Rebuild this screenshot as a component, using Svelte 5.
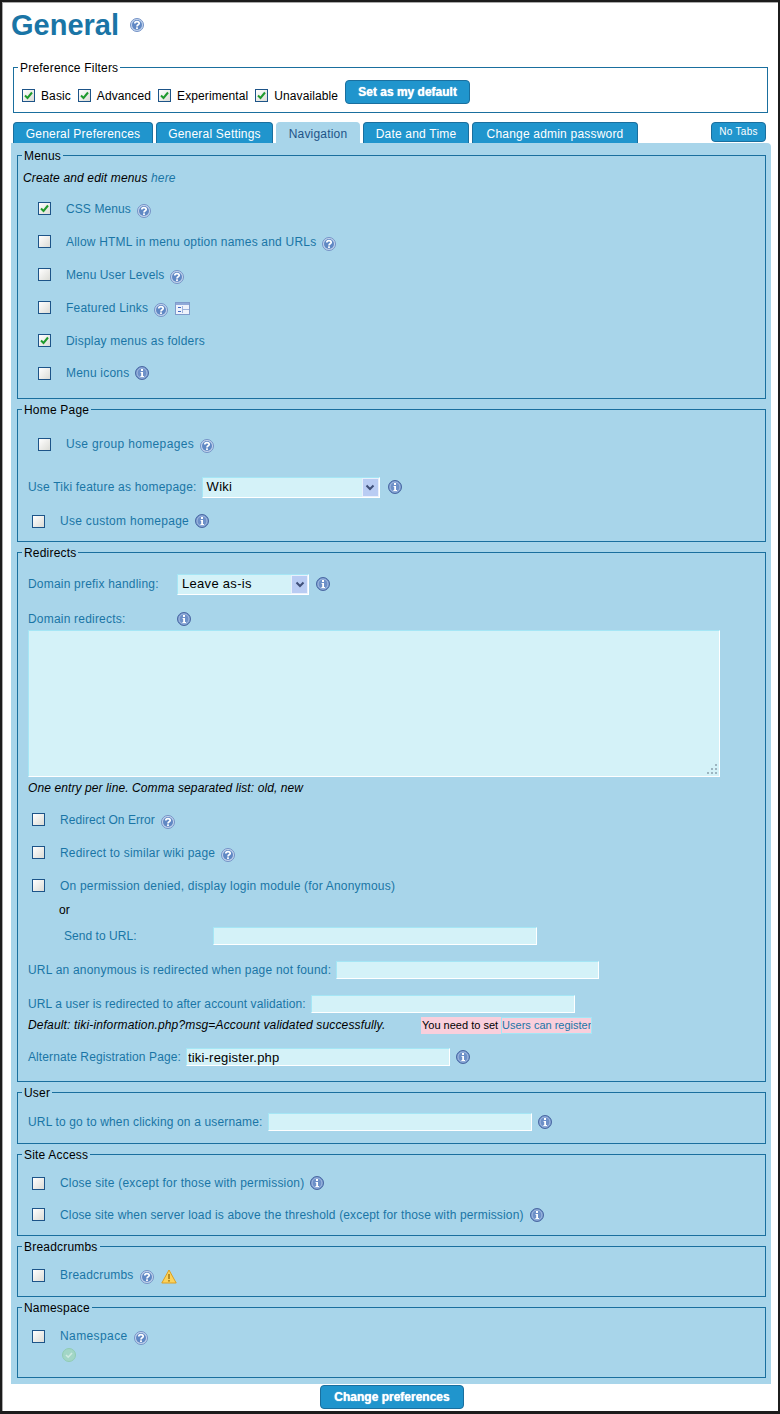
<script>
  const tabs = [
    { label: 'General Preferences', width: 140 },
    { label: 'General Settings', width: 117 },
    { label: 'Navigation', width: 84 },
    { label: 'Date and Time', width: 106 },
    { label: 'Change admin password', width: 166 }
  ];
  const filters = ['Basic', 'Advanced', 'Experimental', 'Unavailable'];
</script>

{#snippet help()}
  <svg class="ico help" width="14" height="14" viewBox="0 0 14 14" aria-hidden="true">
    <circle cx="7" cy="7" r="6.5" fill="#c6d6ee" stroke="#7392c6"/>
    <circle cx="7" cy="7" r="5" fill="#6088c4"/>
    <path d="M4.8 5.4C4.8 3 9.2 3 9.2 5.4C9.2 6.9 7 6.6 7 8.4" fill="none" stroke="#fff" stroke-width="1.7"/>
    <rect x="6.1" y="9.3" width="1.8" height="1.8" fill="#fff"/>
  </svg>
{/snippet}

{#snippet info()}
  <svg class="ico" width="14" height="14" viewBox="0 0 14 14" aria-hidden="true">
    <circle cx="7" cy="7" r="6.5" fill="#6d90c8" stroke="#4a68a2"/>
    <circle cx="7" cy="7" r="5" fill="none" stroke="#a6bde2"/>
    <rect x="6" y="3" width="2" height="2" fill="#fff"/>
    <path d="M5.6 6H8V10H9V11H5.4V10H6.2V7H5.6Z" fill="#fff"/>
  </svg>
{/snippet}

{#snippet box(on)}
  <span class="box">
    {#if on}
      <svg width="11" height="11" viewBox="0 0 11 11" aria-hidden="true"><path d="M2 5.5L4.5 8L9 2.5" fill="none" stroke="#1f9a2c" stroke-width="2"/></svg>
    {/if}
  </span>
{/snippet}

{#snippet select(value, cls)}
  <div class="select {cls}">
    <span>{value}</span>
    <span class="arrow"><svg width="10" height="7" viewBox="0 0 10 7" aria-hidden="true"><path d="M1.5 1.5L5 5L8.5 1.5" fill="none" stroke="#3f4f78" stroke-width="2"/></svg></span>
  </div>
{/snippet}

<div class="frame">
  <h1>General <span class="titleico">{@render help()}</span></h1>

  <fieldset class="filters">
    <legend>Preference Filters</legend>
    <div class="filter-row">
      {#each filters as f}
        <span class="filter">{@render box(true)}<span>{f}</span></span>
      {/each}
      <button class="btn default-btn">Set as my default</button>
    </div>
  </fieldset>

  <div class="tabs">
    {#each tabs as t, i}
      <span class="tab" class:active={i === 2} style="width: {t.width}px">{t.label}</span>
    {/each}
    <button class="notabs">No Tabs</button>
  </div>

  <div class="panel">
    <fieldset>
      <legend>Menus</legend>
      <div class="intro"><em class="sp15">Create and edit menus <a href="#here">here</a></em></div>
      <div class="row h33 ind6">{@render box(true)}<a class="lbl sp1" href="#a">CSS Menus</a>{@render help()}</div>
      <div class="row h33 ind6">{@render box(false)}<a class="lbl" href="#a">Allow HTML in menu option names and URLs</a>{@render help()}</div>
      <div class="row h33 ind6">{@render box(false)}<a class="lbl sp1" href="#a">Menu User Levels</a>{@render help()}</div>
      <div class="row h33 ind6">{@render box(false)}<a class="lbl" href="#a">Featured Links</a>{@render help()}
        <svg class="docs" width="15" height="13" viewBox="0 0 15 13" aria-hidden="true">
          <rect x=".5" y=".5" width="14" height="12" fill="#eef2fb" stroke="#7f9bcb"/>
          <rect x="1" y="1" width="13" height="2" fill="#8fa9d8"/>
          <path d="M3 5.5H6M3 9.5H6" stroke="#3f68c0"/>
          <path d="M7.5 4V11M7.5 7.5H14" stroke="#9db3dc"/>
        </svg>
      </div>
      <div class="row h33 ind6">{@render box(true)}<a class="lbl" href="#a">Display menus as folders</a></div>
      <div class="row h32 ind6 last9">{@render box(false)}<a class="lbl" href="#a">Menu icons</a>{@render info()}</div>
    </fieldset>

    <fieldset>
      <legend>Home Page</legend>
      <div class="row h54 ind6">{@render box(false)}<a class="lbl sp35" href="#a">Use group homepages</a>{@render help()}</div>
      <div class="row h32 ind-f">
        <span class="plain">Use Tiki feature as homepage:</span>
        {@render select('Wiki', 'sel-wiki')}
        {@render info()}
      </div>
      <div class="row h36 ind0 last2">{@render box(false)}<a class="lbl sp3" href="#a">Use custom homepage</a>{@render info()}</div>
    </fieldset>

    <fieldset>
      <legend>Redirects</legend>
      <div class="row h48 ind-f">
        <span class="plain w149">Domain prefix handling:</span>
        {@render select('Leave as-is', 'sel-leave')}
        {@render info()}
      </div>
      <div class="row h22 ind-f tight">
        <span class="plain w149">Domain redirects:</span>
        {@render info()}
      </div>
      <div class="ta-wrap">
        <textarea class="ta"></textarea>
        <svg class="grip" width="12" height="12" viewBox="0 0 12 12" aria-hidden="true">
          <path d="M9 1h2v2H9zM5 5h2v2H5zM9 5h2v2H9zM1 9h2v2H1zM5 9h2v2H5zM9 9h2v2H9z" fill="#9db5c0"/>
        </svg>
      </div>
      <div class="note h22"><em class="sp1">One entry per line. Comma separated list: old, new</em></div>
      <div class="row h33 ind0 mt4">{@render box(false)}<a class="lbl sp05" href="#a">Redirect On Error</a>{@render help()}</div>
      <div class="row h33 ind0">{@render box(false)}<a class="lbl" href="#a">Redirect to similar wiki page</a>{@render help()}</div>
      <div class="row h33 ind0">{@render box(false)}<a class="lbl" href="#a">On permission denied, display login module (for Anonymous)</a></div>
      <div class="or">or</div>
      <div class="row h40 send">
        <span class="plain w149 sp05">Send to URL:</span>
        <input class="input w324" />
      </div>
      <div class="row h28 ind-f">
        <span class="plain">URL an anonymous is redirected when page not found:</span>
        <input class="input w263" />
      </div>
      <div class="row h26 ind-f mt7">
        <span class="plain sp1">URL a user is redirected to after account validation:</span>
        <input class="input w264" />
      </div>
      <div class="default-row">
        <em class="default-text">Default: tiki-information.php?msg=Account validated successfully.</em>
        <span class="warn">You need to set <a href="#r">Users can register</a></span>
      </div>
      <div class="row h24 ind-f mt12 last12">
        <span class="plain sp1">Alternate Registration Page:</span>
        <input class="input w264 alt" value="tiki-register.php" />
        {@render info()}
      </div>
    </fieldset>

    <fieldset>
      <legend>User</legend>
      <div class="row h43 ind-f">
        <span class="plain sp15">URL to go to when clicking on a username:</span>
        <input class="input w264" />
        {@render info()}
      </div>
    </fieldset>

    <fieldset>
      <legend>Site Access</legend>
      <div class="row h32 ind0 mt5">{@render box(false)}<a class="lbl" href="#a">Close site (except for those with permission)</a>{@render info()}</div>
      <div class="row h31 ind0 last5">{@render box(false)}<a class="lbl sp15" href="#a">Close site when server load is above the threshold (except for those with permission)</a>{@render info()}</div>
    </fieldset>

    <fieldset>
      <legend>Breadcrumbs</legend>
      <div class="row h32 ind0 mt5 last5">{@render box(false)}<a class="lbl" href="#a">Breadcrumbs</a>{@render help()}
        <svg class="warnico" width="16" height="15" viewBox="0 0 16 15" aria-hidden="true">
          <path d="M8 1L15.2 14H.8Z" fill="#fbd35c" stroke="#dd9f20" stroke-linejoin="round"/>
          <path d="M8 5V10" stroke="#a87c14" stroke-width="1.6"/>
          <rect x="7.2" y="11" width="1.6" height="1.6" fill="#a87c14"/>
        </svg>
      </div>
    </fieldset>

    <fieldset>
      <legend>Namespace</legend>
      <div class="row h32 ind0 mt5">{@render box(false)}<a class="lbl sp4" href="#a">Namespace</a>{@render help()}</div>
      <div class="tick">
        <svg width="14" height="14" viewBox="0 0 14 14" aria-hidden="true">
          <circle cx="7" cy="7" r="6.5" fill="#a2d6c6" stroke="#90ccb2"/>
          <path d="M4 7L6.2 9.2L10 5" fill="none" stroke="#cfeae2" stroke-width="1.6"/>
        </svg>
      </div>
    </fieldset>
  </div>

  <div class="submit"><button class="btn change">Change preferences</button></div>
</div>

<style>
  :global(body) { margin: 0; background: #fff; }
  .frame {
    box-sizing: border-box;
    width: 780px;
    height: 1414px;
    border: 2px solid #1c1c1c;
    border-bottom-width: 3px;
    box-shadow: inset 1px 1px 0 #aaa;
    background: #fff;
    font: 12px/14px "Liberation Sans", Arial, sans-serif;
    letter-spacing: 0.2px;
    color: #000;
    overflow: hidden;
  }
  h1 {
    margin: 0;
    height: 59px;
    padding: 2px 0 16px 9px;
    box-sizing: border-box;
    font: bold 29px/36px "Liberation Sans", Arial, sans-serif;
    letter-spacing: 0;
    color: #1a75a6;
    display: flex;
    align-items: center;
  }
  .titleico { display: inline-flex; margin-left: 5px; }
  .ico { flex: none; margin-left: 6px; }
  .help { position: relative; top: 2px; }
  .titleico .help { top: 0; }
  fieldset {
    margin: 0 5px 4px 6px;
    padding: 1px 0 0;
    border: 1px solid #1a6f9e;
    min-width: 0;
  }
  legend {
    margin-left: 4px;
    padding: 0 2px;
    line-height: 13px;
    color: #000;
    position: relative;
    top: 1px;
  }
  .filters {
    margin: 0 10px 0 11px;
    padding: 0;
    height: 52px;
    box-sizing: border-box;
  }
  .filter-row {
    display: flex;
    align-items: center;
    height: 30px;
    padding: 6px 0 0 8px;
    box-sizing: border-box;
    letter-spacing: 0.1px;
  }
  .filter { display: flex; align-items: center; gap: 6px; margin: 7px 7px 0 0; }
  .box {
    flex: none;
    box-sizing: border-box;
    width: 13px;
    height: 13px;
    border: 1px solid #1d5488;
    background: linear-gradient(135deg, #fff, #dcdcd6);
    display: inline-flex;
    align-items: center;
    justify-content: center;
  }
  .btn {
    font: bold 12px/14px "Liberation Sans", Arial, sans-serif;
    letter-spacing: 0;
    color: #fff;
    background: #2095cd;
    border: 1px solid #1a6f9e;
    border-radius: 4px;
    padding: 0;
    text-shadow: 0 0 1px #fff;
  }
  .default-btn { width: 125px; height: 24px; }
  .tabs {
    display: flex;
    gap: 3px;
    height: 21px;
    margin: 9px 0 0 11px;
    align-items: flex-start;
  }
  .tab {
    box-sizing: border-box;
    height: 21px;
    padding-top: 4px;
    text-align: center;
    background: #2095cd;
    color: #fff;
    border: 1px solid #1a6f9e;
    border-bottom: 0;
    border-radius: 4px 4px 0 0;
    white-space: nowrap;
  }
  .tab.active { background: #a8d5ea; color: #1d5488; border-color: #a8d5ea; }
  .notabs {
    margin-left: auto;
    margin-right: 12px;
    width: 55px;
    height: 20px;
    padding: 0;
    font: 10px/12px "Liberation Sans", Arial, sans-serif;
    letter-spacing: 0.3px;
    color: #fff;
    background: #2095cd;
    border: 1px solid #1a6f9e;
    border-radius: 4px;
  }
  .panel {
    margin: 0 7px 0 9px;
    padding: 6px 0 2px;
    background: #a8d5ea;
    border-radius: 0 4px 0 0;
  }
  .intro { height: 29px; padding-left: 5px; display: flex; align-items: center; }
  a { color: #1a75a6; text-decoration: none; }
  .row { display: flex; align-items: center; white-space: nowrap; }
  .h22 { height: 22px; }
  .h24 { height: 24px; }
  .h26 { height: 26px; }
  .h28 { height: 28px; }
  .h31 { height: 31px; }
  .h32 { height: 32px; }
  .h33 { height: 33px; }
  .h36 { height: 36px; }
  .h40 { height: 40px; }
  .h43 { height: 43px; }
  .h48 { height: 48px; }
  .h54 { height: 54px; }
  .ind6 { padding-left: 20px; }
  .ind0 { padding-left: 14px; }
  .ind-f { padding-left: 10px; }
  .mt4 { margin-top: 4px; }
  .mt5 { margin-top: 5px; }
  .mt7 { margin-top: 7px; }
  .mt12 { margin-top: 12px; }
  .last2 { margin-bottom: 2px; }
  .last5 { margin-bottom: 5px; }
  .last9 { margin-bottom: 9px; }
  .last12 { margin-bottom: 12px; }
  .lbl { margin-left: 15px; }
  .sp05 { letter-spacing: 0.05px; }
  .sp1 { letter-spacing: 0.1px; }
  .sp15 { letter-spacing: 0.15px; }
  .sp3 { letter-spacing: 0.3px; }
  .sp35 { letter-spacing: 0.35px; }
  .sp4 { letter-spacing: 0.4px; }
  .plain { color: #1a75a6; margin-right: 5px; }
  .w149 { display: inline-block; width: 144px; }
  .tight .ico { margin-left: 0; }
  .docs { margin-left: 7px; position: relative; top: 1px; }
  .warnico { margin-left: 7px; position: relative; top: 1px; }
  .select {
    box-sizing: border-box;
    display: flex;
    align-items: center;
    justify-content: space-between;
    height: 21px;
    background: #d4f2f8;
    border: 1px solid #a5e6f5;
    border-right-color: #fff;
    border-bottom-color: #fff;
    font-size: 13px;
    padding-left: 4px;
    color: #000;
    letter-spacing: 0.3px;
    flex: none;
  }
  .sel-wiki { width: 178px; margin-right: 2px; }
  .sel-leave { width: 132px; margin-right: 1px; }
  .arrow {
    box-sizing: border-box;
    width: 17px;
    height: 19px;
    background: #b9ccf3;
    border: 1px solid #e8f0fc;
    display: flex;
    align-items: center;
    justify-content: center;
  }
  .ta-wrap { position: relative; height: 147px; margin-left: 10px; width: 692px; }
  .ta {
    display: block;
    box-sizing: border-box;
    width: 692px;
    height: 147px;
    margin: 0;
    padding: 2px;
    resize: none;
    outline: 0;
    background: #d4f2f8;
    border: 1px solid #a5e6f5;
    border-right-color: #fff;
    border-bottom-color: #fff;
  }
  .grip { position: absolute; right: 2px; bottom: 2px; }
  .note { display: flex; align-items: center; padding-left: 10px; }
  .or { height: 14px; line-height: 16px; padding-left: 41px; }
  .send { padding-left: 46px; }
  .input {
    box-sizing: border-box;
    height: 18px;
    margin: 0;
    padding: 0 1px;
    outline: 0;
    font: 13px/16px "Liberation Sans", Arial, sans-serif;
    letter-spacing: 0.2px;
    background: #d4f2f8;
    border: 1px solid #a5e6f5;
    border-right-color: #fff;
    border-bottom-color: #fff;
    color: #000;
    flex: none;
  }
  .w324 { width: 324px; }
  .w263 { width: 263px; }
  .w264 { width: 264px; }
  .default-row { display: flex; align-items: center; height: 16px; padding-left: 10px; white-space: nowrap; }
  .default-text { width: 393px; letter-spacing: 0.15px; flex: none; }
  .warn {
    box-sizing: border-box;
    height: 17px;
    line-height: 15px;
    background: #f9cfdc;
    font-size: 11px;
    letter-spacing: 0;
    padding-left: 0;
    border: 1px solid #f9cfdc;
  }
  .warn a { display: inline-block; outline: 1px solid #a5e6f5; margin-left: 1px; }
  .tick { height: 29px; margin-top: -4px; padding-left: 44px; box-sizing: border-box; }
  .tick svg { display: block; }
  .submit { display: flex; justify-content: center; padding: 1px 0 0 4px; }
  .change { width: 144px; height: 24px; }
</style>
